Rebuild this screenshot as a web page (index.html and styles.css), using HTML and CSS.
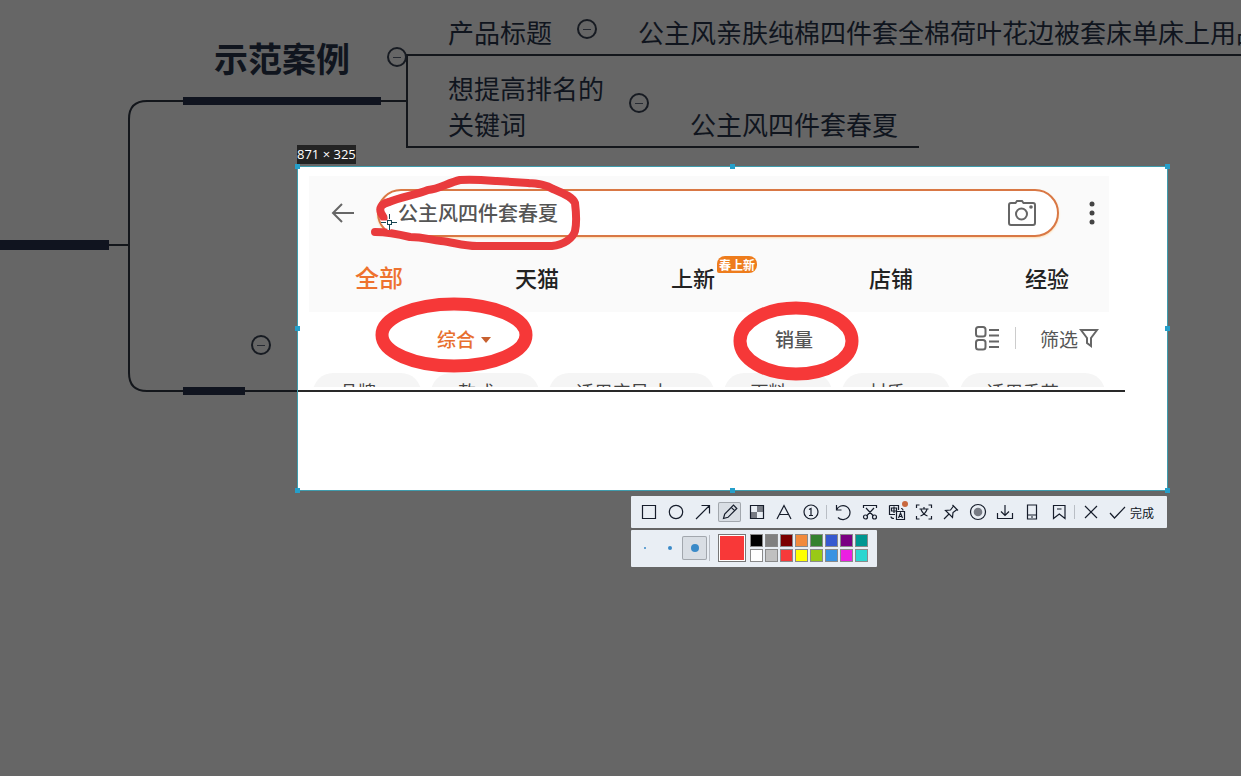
FILE: index.html
```html
<!DOCTYPE html>
<html lang="zh-CN">
<head>
<meta charset="utf-8">
<title>示范案例</title>
<link rel="stylesheet" href="styles.css">
</head>
<body>
<main class="canvas">
  <svg class="branches" aria-hidden="true">
    <g class="thin">
      <path d="M109 245H129"/>
      <path d="M407 101H147Q129 101 129 119V373Q129 391 147 391H298"/>
      <path d="M4000 55H407V147H919"/>
    </g>
    <path class="thick" d="M0 240h109v10H0zM183 97h198v8H183zM183 387h62v8h-62z"/>
  </svg>

  <h1 class="node title">示范案例</h1>
  <p class="node n-label">产品标题</p>
  <p class="node n-name">公主风亲肤纯棉四件套全棉荷叶花边被套床单床上用品</p>
  <p class="node n-goal">想提高排名的<br>关键词</p>
  <p class="node n-word">公主风四件套春夏</p>
  <button class="fold f1" aria-label="折叠示范案例"></button>
  <button class="fold f2" aria-label="折叠产品标题"></button>
  <button class="fold f3" aria-label="折叠关键词"></button>
  <button class="fold f4" aria-label="折叠分支"></button>

  <section class="selection">
    <output class="size">871 × 325</output>
    <div class="shop">
      <header class="head">
        <div class="searchrow">
          <button class="plain back" aria-label="返回"><svg width="24" height="24" viewBox="0 0 24 24"><path d="M23 12H2M11 3L2 12l9 9"/></svg></button>
          <div class="search">
            <input type="text" aria-label="搜索" value="公主风四件套春夏">
            <button class="plain" aria-label="拍照搜索"><svg width="30" height="28" viewBox="0 0 30 28"><path d="M4 4h4.500l1.500-2h5l1.500 2H26a2 2 0 0 1 2 2v18a2 2 0 0 1-2 2H4a2 2 0 0 1-2-2V6a2 2 0 0 1 2-2z"/><circle cx="14.500" cy="15" r="5.500"/><circle class="dot" cx="24" cy="8" r="1.800"/></svg></button>
          </div>
          <button class="plain more" aria-label="更多"><svg width="8" height="26" viewBox="0 0 8 26"><circle cx="4" cy="4" r="2.500"/><circle cx="4" cy="13" r="2.500"/><circle cx="4" cy="22" r="2.500"/></svg></button>
        </div>
        <nav class="tabs">
          <a href="#all" class="current">全部</a>
          <a href="#tmall">天猫</a>
          <a href="#new">上新<span class="badge">春上新</span></a>
          <a href="#store">店铺</a>
          <a href="#exp">经验</a>
        </nav>
      </header>
      <div class="sorts">
        <button class="plain hot">综合<svg width="12" height="8" viewBox="0 0 12 8"><path d="M1 1h10L6 7z"/></svg></button>
        <button class="plain sales">销量</button>
        <button class="plain view" aria-label="切换视图"><svg width="25" height="25" viewBox="0 0 25 25"><rect x="1" y="1" width="9.500" height="9.500" rx="2.500"/><rect x="1" y="14" width="9.500" height="9.500" rx="2.500"/><path d="M14 4h10M14 9.500h10M14 15.500h10M14 21h10"/></svg></button>
        <i class="bar"></i>
        <button class="plain filter">筛选<svg width="20" height="20" viewBox="0 0 20 20"><path d="M2 2h16l-6 8v8l-4-3v-5z"/></svg></button>
      </div>
      <div class="chips">
        <span class="short">品牌</span><span class="short">款式</span><span class="long">适用床尺寸</span><span class="short">面料</span><span class="short">材质</span><span class="mid">适用季节</span>
      </div>
    </div>
    <div class="branchline"></div>

    <svg class="ink" viewBox="298 167 870 324" aria-hidden="true">
      <path class="stroke" d="M375 232C388 232 398 234 410 237C424 237 430 240 441 241C453 242 462 246 477 246L552 246C564 245 573 238 575 231C577 222 576 211 575 203C572 196 562 193 553 189C545 184 538 184 528 183L497 181C484 180 472 179 460 180C448 183 438 189 428 190C416 195 400 197 389 202C381 204 379 208 381 213L384 218"/>
      <ellipse cx="454" cy="335" rx="72" ry="31"/>
      <ellipse cx="796" cy="341" rx="56" ry="33"/>
      <path class="halo" d="M381 222h16M389 214v16"/>
      <path class="cross" d="M381 222h5M392 222h5M389 214v5M389 225v5M387 220h4v4h-4z"/>
    </svg>
    <i class="grip nw"></i><i class="grip n"></i><i class="grip ne"></i>
    <i class="grip w"></i><i class="grip e"></i>
    <i class="grip sw"></i><i class="grip s"></i><i class="grip se"></i>
  </section>

  <div class="tools">
    <div class="panel bar1">
      <button aria-label="矩形"><svg viewBox="0 0 18 18"><path d="M2.500 2.500h13v13h-13z"/></svg></button>
      <button aria-label="椭圆"><svg viewBox="0 0 18 18"><circle cx="9" cy="9" r="6.700"/></svg></button>
      <button aria-label="箭头"><svg viewBox="0 0 18 18"><path d="M2 16L15.500 2.500M7.500 2.500h8v8"/></svg></button>
      <button class="on" aria-label="画笔"><svg viewBox="0 0 18 18"><path d="M2.500 15.500l1.200-4.500L12.500 2.200l3.300 3.300L7 14.300zM10.300 4.400l3.300 3.300"/></svg></button>
      <button aria-label="马赛克"><svg viewBox="0 0 18 18"><path class="grey" d="M9 3h6v6H9zM3 9h6v6H3z"/><path d="M2.500 2.500h13v13h-13z"/></svg></button>
      <button aria-label="文字"><svg viewBox="0 0 18 18"><path d="M2 16L9 2.500 16 16M4.500 11.500h9"/></svg></button>
      <button aria-label="序号"><svg viewBox="0 0 18 18"><circle cx="9" cy="9" r="7"/><path d="M7 6.500l2-1V12.500M7 12.500h4"/></svg></button>
      <i class="sep"></i>
      <button aria-label="撤销"><svg viewBox="0 0 18 18"><path d="M2.500 2v5h5M2.500 7A7 7 0 1 1 4 14.500"/></svg></button>
      <button aria-label="剪切"><svg viewBox="0 0 18 18"><path d="M2.500 5V2.500h13V5M5 5l7.500 8M13 5l-7.500 8"/><circle cx="4.500" cy="14" r="2"/><circle cx="13.500" cy="14" r="2"/></svg></button>
      <button class="new" aria-label="翻译"><svg viewBox="0 0 18 18"><path d="M1.500 2.500h9V7M1.500 2.500v9H7M3.500 5h5v3h-5zM6 3.500v6.500M8.500 8.500h8v8h-8zM10.500 15l2-5 2 5M11 13.500h3M3 13.500q0 2 3 2M13 5.500q2 0 2 2"/></svg></button>
      <button aria-label="识别文字"><svg viewBox="0 0 18 18"><path d="M1.500 5V2h3M13.500 2h3v3M1.500 13v3h3M13.500 16h3v-3M4.500 6h9M9 4v2M6 6.500q2 5 6.500 6.500M12 6.500q-2 5-6.500 6.500"/></svg></button>
      <button aria-label="钉住"><svg viewBox="0 0 18 18"><path d="M10.500 2l5.500 5.500M11.500 3L8.500 7l-5 .500 7 7 .500-5 4-3M7 11l-5 5"/></svg></button>
      <button aria-label="录制"><svg viewBox="0 0 18 18"><circle cx="9" cy="9" r="7.500"/><circle class="grey" cx="9" cy="9" r="4.300"/></svg></button>
      <button aria-label="保存"><svg viewBox="0 0 18 18"><path d="M9 2v10M5 8.500L9 12.500l4-4M1.500 10v5.500h15V10"/></svg></button>
      <button aria-label="发送到手机"><svg viewBox="0 0 18 18"><path d="M4.500 2h9v14h-9zM4.500 12h9M8 14h2"/></svg></button>
      <button aria-label="收藏"><svg viewBox="0 0 18 18"><path d="M3.500 2.500h11.500v13L9.300 11l-5.800 4.500zM7 6h4.500"/></svg></button>
      <i class="sep"></i>
      <button aria-label="取消"><svg viewBox="0 0 18 18"><path d="M3 3l12 12M15 3L3 15"/></svg></button>
      <button class="done"><svg viewBox="0 0 18 18"><path d="M2 10l4.500 5L17 4"/></svg>完成</button>
    </div>
    <div class="panel bar2">
      <button class="pen p1" aria-label="细"></button>
      <button class="pen p2" aria-label="中"></button>
      <button class="pen p3 on" aria-label="粗"></button>
      <i class="sep"></i>
      <button class="colour" aria-label="当前颜色"></button>
      <div class="palette">
        <button class="black" aria-label="黑"></button><button class="gray" aria-label="灰"></button><button class="maroon" aria-label="深红"></button><button class="orange" aria-label="橙"></button><button class="green" aria-label="绿"></button><button class="blue" aria-label="蓝"></button><button class="purple" aria-label="紫"></button><button class="teal" aria-label="青"></button>
        <button class="white" aria-label="白"></button><button class="silver" aria-label="浅灰"></button><button class="red" aria-label="红"></button><button class="yellow" aria-label="黄"></button><button class="lime" aria-label="黄绿"></button><button class="sky" aria-label="天蓝"></button><button class="pink" aria-label="粉"></button><button class="aqua" aria-label="水蓝"></button>
      </div>
    </div>
  </div>
</main>
</body>
</html>
```
FILE: styles.css
```css
* { box-sizing: border-box; }
body {
  margin: 0;
  background: #666;
  color: #10151e;
  font-family: "Noto Sans CJK SC", sans-serif;
}
button, input { font: inherit; color: inherit; border: 0; padding: 0; margin: 0; background: none; }
svg { fill: none; flex: none; }
.canvas { position: relative; min-height: 100vh; overflow: hidden; }

/* Mind map */
.branches { position: absolute; left: 0; top: 0; width: 100%; height: 100%; }
.thin { stroke: #13161b; stroke-width: 2; }
.thick { fill: #10141f; }
.node { position: absolute; margin: 0; font-size: 26px; line-height: 36px; font-weight: 400; white-space: nowrap; }
.title { left: 214px; top: 34px; font-size: 34px; line-height: 48px; font-weight: 700; }
.n-label { left: 448px; top: 14px; }
.n-name { left: 638px; top: 14px; }
.n-goal { left: 448px; top: 70px; }
.n-word { left: 690px; top: 106px; }
.fold {
  position: absolute; display: grid; place-items: center;
  width: 20px; height: 20px; border: 2px solid #171b22; border-radius: 50%;
}
.fold::before { content: ""; width: 8px; height: 1px; background: #262a32; }
.f1 { left: 387px; top: 47px; }
.f2 { left: 577px; top: 19px; }
.f3 { left: 629px; top: 93px; }
.f4 { left: 251px; top: 335px; }

/* Captured area */
.selection {
  position: absolute; left: 297px; top: 166px; width: 871px; height: 325px;
  padding: 9px 0 0 11px;
  background: #fff; border: 1px solid #3f9cad;
}
.size {
  position: absolute; left: -1px; top: -22px;
  background: #232323; color: #fff;
  font: 13px/19px "Open Sans", "Noto Sans", sans-serif; white-space: nowrap;
}
.shop { width: 800px; color: #333; }
.head { height: 136px; background: #fafafa; padding-top: 13px; }
.searchrow { display: flex; align-items: center; padding: 0 13px 0 22px; }
.plain { display: flex; align-items: center; white-space: nowrap; }
.plain svg { stroke: #666; stroke-width: 2; }
.back { margin-right: 22px; }
.search {
  flex: 1; display: flex; align-items: center; height: 48px;
  padding: 0 20px 0 19px; border: 2px solid #d97845; border-radius: 24px;
  background: #fff; box-shadow: 0 1px 2px #ffdcae;
}
.search input { flex: 1; min-width: 0; height: 32px; padding-bottom: 2px; font-size: 20px; font-weight: 500; color: #555; outline: 0; }
.search .dot { fill: #666; stroke: none; }
.more { margin-left: 29px; }
.more svg { fill: #444; stroke: none; }
.tabs {
  display: flex; justify-content: space-between; align-items: center;
  padding: 0 40px 0 46px; margin-top: 22px; height: 36px;
}
.tabs a { display: flex; color: #222; text-decoration: none; font-size: 22px; line-height: 36px; font-weight: 500; }
.tabs .current { color: #ee722f; font-size: 24px; }
.badge {
  align-self: flex-start; height: 17px; margin-top: -3px; margin-left: 2px; padding: 0 2px;
  border-radius: 8px 8px 8px 2px; background: #ee7c1c; color: #fff;
  font-size: 12px; line-height: 17px; font-weight: 700;
}
.sorts { display: flex; align-items: center; height: 54px; padding: 0 10px 2px 128px; font-size: 19px; color: #555; }
.hot { color: #e8702f; gap: 5px; font-weight: 500; }
.hot svg { fill: #c7602f; stroke: none; margin-top: 4px; }
.sales { margin-left: 283px; font-weight: 500; }
.view { margin-left: auto; }
.bar { width: 1px; height: 22px; margin: 0 24px 0 15px; background: #ccc; }
.filter { gap: 1px; }
.chips {
  display: flex; gap: 10px; height: 21px; padding: 7px 4px 0;
  overflow: hidden; color: #444; font-size: 18px;
}
.chips span {
  height: 40px; border-radius: 20px; text-indent: 27px;
  background: #f5f5f5; line-height: 36px; white-space: nowrap;
}
.short { flex: 108; }
.mid { flex: 145; }
.long { flex: 164; }
.branchline { width: 827px; height: 2px; margin: 3px 0 0 -11px; background: #292929; }
.ink { position: absolute; left: 0; top: 0; width: 870px; height: 324px; stroke: #f63838; stroke-width: 13; }
.ink .stroke { stroke: #e93b3d; stroke-width: 8; stroke-linecap: round; stroke-linejoin: round; }
.ink .halo { stroke: #fff; stroke-width: 3; }
.ink .cross { stroke: #174553; stroke-width: 1; fill: #fff; shape-rendering: crispEdges; }
.grip { position: absolute; width: 5px; height: 5px; background: #259fca; }
.nw, .n, .ne { top: -3px; }
.w, .e { top: 159px; }
.sw, .s, .se { bottom: -3px; }
.nw, .w, .sw { left: -3px; }
.n, .s { left: 432px; }
.ne, .e, .se { right: -3px; }

/* Annotation tools */
.tools { position: absolute; left: 631px; top: 496px; display: grid; gap: 2px; justify-items: start; }
.panel { display: flex; align-items: center; background: #e9eef4; border-radius: 1px; }
.bar1 { height: 32px; padding: 0 11px 0 4px; }
.bar1 button { position: relative; display: grid; place-items: center; width: 23px; height: 20px; margin: 0 2px; border-radius: 2px; }
.bar1 svg { width: 18px; height: 18px; stroke: #161d2b; stroke-width: 1.2; }
.bar1 .on, .bar2 .on { background: #d9dee4; box-shadow: inset 0 0 0 1px #a2a7ad; }
.bar1 .grey { fill: #777b84; stroke: none; }
.new::after { content: ""; position: absolute; right: 0; top: -1px; width: 6px; height: 6px; border-radius: 50%; background: #c8683e; }
.sep { width: 1px; height: 14px; margin: 0 2px; background: #b9bec5; }
.bar1 .done { display: flex; align-items: center; gap: 3px; width: auto; margin-left: 4px; font-size: 12px; white-space: nowrap; }
.done svg { margin-right: 1px; }
.bar2 { height: 37px; padding: 0 9px 2px 1px; }
.pen { display: grid; place-items: center; width: 25px; height: 24px; border-radius: 2px; }
.pen::before { content: ""; border-radius: 50%; background: #3a8ac8; }
.p1::before { width: 2px; height: 2px; }
.p2::before { width: 4px; height: 4px; }
.p3::before { width: 8px; height: 8px; }
.bar2 .sep { height: 26px; }
.colour { width: 28px; height: 28px; margin: 0 4px 0 6px; border: 1px solid #777; background: #f83838; box-shadow: inset 0 0 0 1px #fff; }
.palette { display: grid; grid-template-columns: repeat(8, 13px); gap: 2px; }
.palette button { height: 13px; border: 1px solid #8a8a8a; }
.black { background: #000; }
.gray { background: #808080; }
.maroon { background: #7b0000; }
.orange { background: #f28a3c; }
.green { background: #35812f; }
.blue { background: #3659cf; }
.purple { background: #790082; }
.teal { background: #009691; }
.white { background: #fff; }
.silver { background: #c0c0c0; }
.red { background: #f63a3a; }
.yellow { background: #ff0; }
.lime { background: #99c917; }
.sky { background: #3792e2; }
.pink { background: #eb20e2; }
.aqua { background: #2bd6d0; }
```
